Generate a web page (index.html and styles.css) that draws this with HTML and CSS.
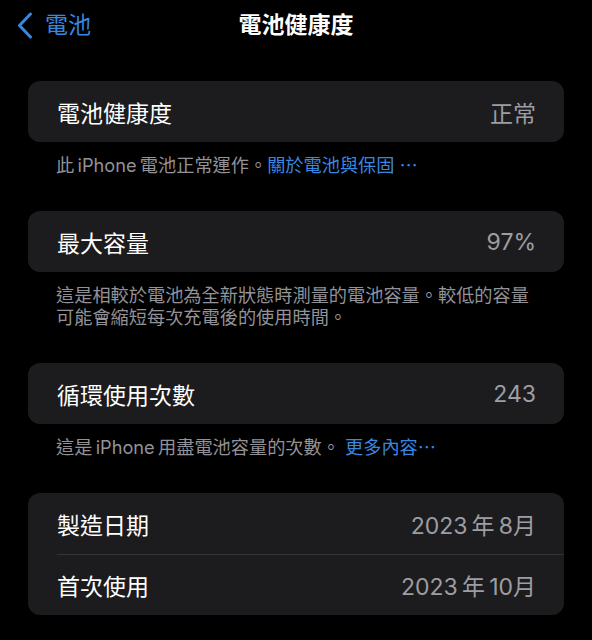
FILE: index.html
```html
<!DOCTYPE html>
<html lang="zh-Hant">
<head>
  <meta charset="UTF-8">
  <title>電池健康度</title>
  <link rel="stylesheet" href="styles.css">
</head>
<body>
  <div class="navbar">
    <a class="back" href="#">
      <svg class="chevron" width="16" height="27" viewBox="0 0 16 27">
        <polyline points="13.5,2 2.5,13.5 13.5,25" fill="none" stroke="#3a87e0" stroke-width="3" stroke-linecap="round" stroke-linejoin="round"/>
      </svg>
      <span>電池</span>
    </a>
    <h1 class="title">電池健康度</h1>
    <div></div>
  </div>

  <div class="content">
    <div class="card">
      <div class="row">
        <span class="label">電池健康度</span>
        <span class="value">正常</span>
      </div>
    </div>
    <p class="note">此&thinsp;iPhone&thinsp;電池正常運作。<a href="#">關於電池與保固 ⋯</a></p>

    <div class="card">
      <div class="row">
        <span class="label">最大容量</span>
        <span class="value">97%</span>
      </div>
    </div>
    <p class="note">這是相較於電池為全新狀態時測量的電池容量。較低的容量可能會縮短每次充電後的使用時間。</p>

    <div class="card">
      <div class="row">
        <span class="label">循環使用次數</span>
        <span class="value">243</span>
      </div>
    </div>
    <p class="note">這是&thinsp;iPhone&thinsp;用盡電池容量的次數。 <a href="#">更多內容⋯</a></p>

    <div class="card">
      <div class="row">
        <span class="label">製造日期</span>
        <span class="value">2023&thinsp;年&thinsp;8月</span>
      </div>
      <div class="row">
        <span class="label">首次使用</span>
        <span class="value">2023&thinsp;年&thinsp;10月</span>
      </div>
    </div>
  </div>
</body>
</html>
```

FILE: styles.css
```css
body {
  margin: 0;
  background: #000;
  color: #fff;
  font-family: Inter, "Noto Sans CJK TC", sans-serif;
}
.navbar {
  display: grid;
  grid-template-columns: 1fr auto 1fr;
  align-items: center;
  height: 50px;
  padding: 0 17px;
}
.back {
  display: flex;
  align-items: center;
  gap: 12px;
  color: #3a87e0;
  text-decoration: none;
  font-size: 23px;
  line-height: 28px;
}
.title {
  margin: 0;
  font-size: 23px;
  line-height: 28px;
  font-weight: 600;
}
.content {
  padding: 31px 28px 0;
}
.card {
  background: #1c1c1e;
  border-radius: 12px;
  overflow: hidden;
}
.row {
  display: flex;
  justify-content: space-between;
  align-items: center;
  height: 61px;
  padding: 0 28px 0 29px;
  font-size: 23px;
  position: relative;
}
.row + .row::before {
  content: "";
  position: absolute;
  left: 29px;
  right: 0;
  top: 0;
  height: 1px;
  background: #343437;
}
.value {
  color: #9d9da3;
}
.note {
  margin: 12px 0 35px;
  padding: 0 28px;
  font-size: 18.2px;
  line-height: 22px;
  color: #929298;
}
.note a {
  color: #3a87e0;
  text-decoration: none;
}
```
